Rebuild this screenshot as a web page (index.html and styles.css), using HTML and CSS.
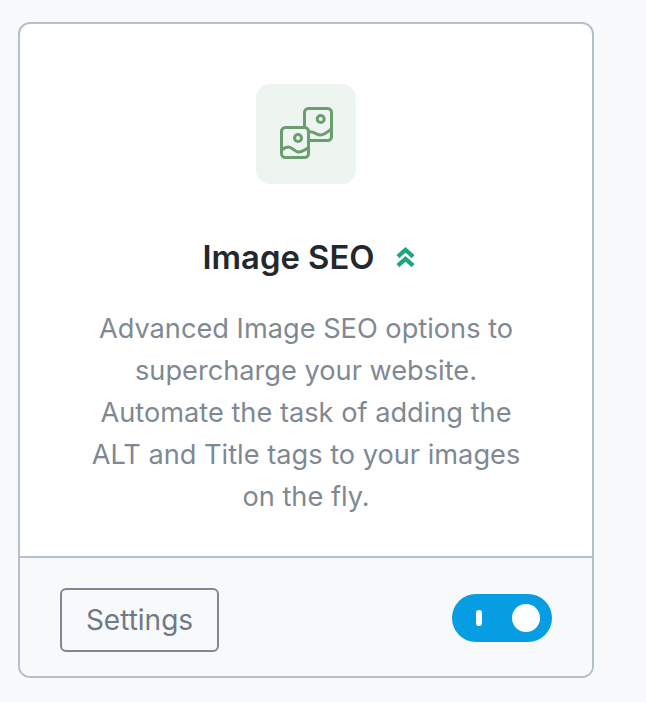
FILE: index.html
```html
<!DOCTYPE html>
<html lang="en">
<head>
<meta charset="utf-8">
<title>Image SEO</title>
<link rel="stylesheet" href="styles.css">
</head>
<body>
<div class="card">
  <div class="card-body">
    <div class="icon-tile">
      <svg class="icon" viewBox="0 0 56 56" width="56" height="56" fill="none" stroke="#6a9e6e" stroke-width="3" stroke-linecap="round" stroke-linejoin="round">
        <path d="M26.500 21.500V6.500a4 4 0 0 1 4-4h19a4 4 0 0 1 4 4v24a4 4 0 0 1-4 4H30.500"/>
        <circle cx="42.700" cy="13" r="3.500"/>
        <path d="M31 26c4-1 7 2.500 11 3 4 .4 7.500-3 11.500-6"/>
        <rect x="3.500" y="21.500" width="27" height="30" rx="4"/>
        <circle cx="20" cy="32" r="3.500"/>
        <path d="M3.500 44c2.500-2 4.500-3 7-3 3.500 0 6 4.500 10 5 3.500.4 6-2.500 10-4"/>
      </svg>
    </div>
    <h2 class="title">Image SEO
      <svg class="chevrons" viewBox="0 0 20 22" width="19" height="22" fill="none" stroke="#1fa67f" stroke-width="4.500" stroke-linejoin="miter">
        <path d="M2 10.500 10 3.500l8 7"/>
        <path d="M2 20 10 13l8 7"/>
      </svg>
    </h2>
    <p class="desc">Advanced Image SEO options to supercharge your website. Automate the task of adding the ALT and Title tags to your images on the fly.</p>
  </div>
  <div class="card-footer">
    <a class="btn">Settings</a>
    <span class="toggle"><span class="toggle-bar"></span><span class="toggle-knob"></span></span>
  </div>
</div>
</body>
</html>
```
FILE: styles.css
```css
* { box-sizing: border-box; }
html, body { margin: 0; background: #f7f9fb; }
body { padding: 22px 0 0 18px; font-family: Inter, "Liberation Sans", sans-serif; }
.card {
  width: 576px;
  height: 656px;
  background: #fff;
  border: 2px solid #b6c0ca;
  border-radius: 12px;
  overflow: hidden;
  display: flex;
  flex-direction: column;
}
.card-body {
  flex: 1;
  display: flex;
  flex-direction: column;
  align-items: center;
  padding: 60px 60px 0;
}
.icon-tile {
  width: 100px;
  height: 100px;
  border-radius: 14px;
  background: #eef4f0;
  display: flex;
  align-items: center;
  justify-content: center;
}
.title {
  margin: 50px 0 0;
  padding-left: 5px;
  font-size: 32.800px;
  line-height: 46px;
  font-weight: 600;
  color: #23282d;
  display: flex;
  align-items: center;
  gap: 21px;
  white-space: nowrap;
}
.desc {
  margin: 28px 0 0;
  font-size: 27.200px;
  line-height: 42px;
  color: #7f8993;
  text-align: center;
  width: 450px;
}
.card-footer {
  height: 120px;
  flex: none;
  background: #f7f9fb;
  border-top: 2px solid #b6c0ca;
  display: flex;
  align-items: center;
  justify-content: space-between;
  padding: 2px 40px 0;
}
.btn {
  width: 159px;
  height: 64px;
  margin-top: 4px;
  border: 2px solid #7f8993;
  border-radius: 6px;
  display: flex;
  align-items: center;
  justify-content: center;
  font-size: 28px;
  color: #6f7a84;
}
.toggle {
  position: relative;
  width: 100px;
  height: 48px;
  border-radius: 24px;
  background: #069de3;
}
.toggle-bar {
  position: absolute;
  left: 24px;
  top: 16px;
  width: 6px;
  height: 16px;
  border-radius: 3px;
  background: #fff;
}
.toggle-knob {
  position: absolute;
  left: 60px;
  top: 10px;
  width: 28px;
  height: 28px;
  border-radius: 50%;
  background: #fff;
}
```
